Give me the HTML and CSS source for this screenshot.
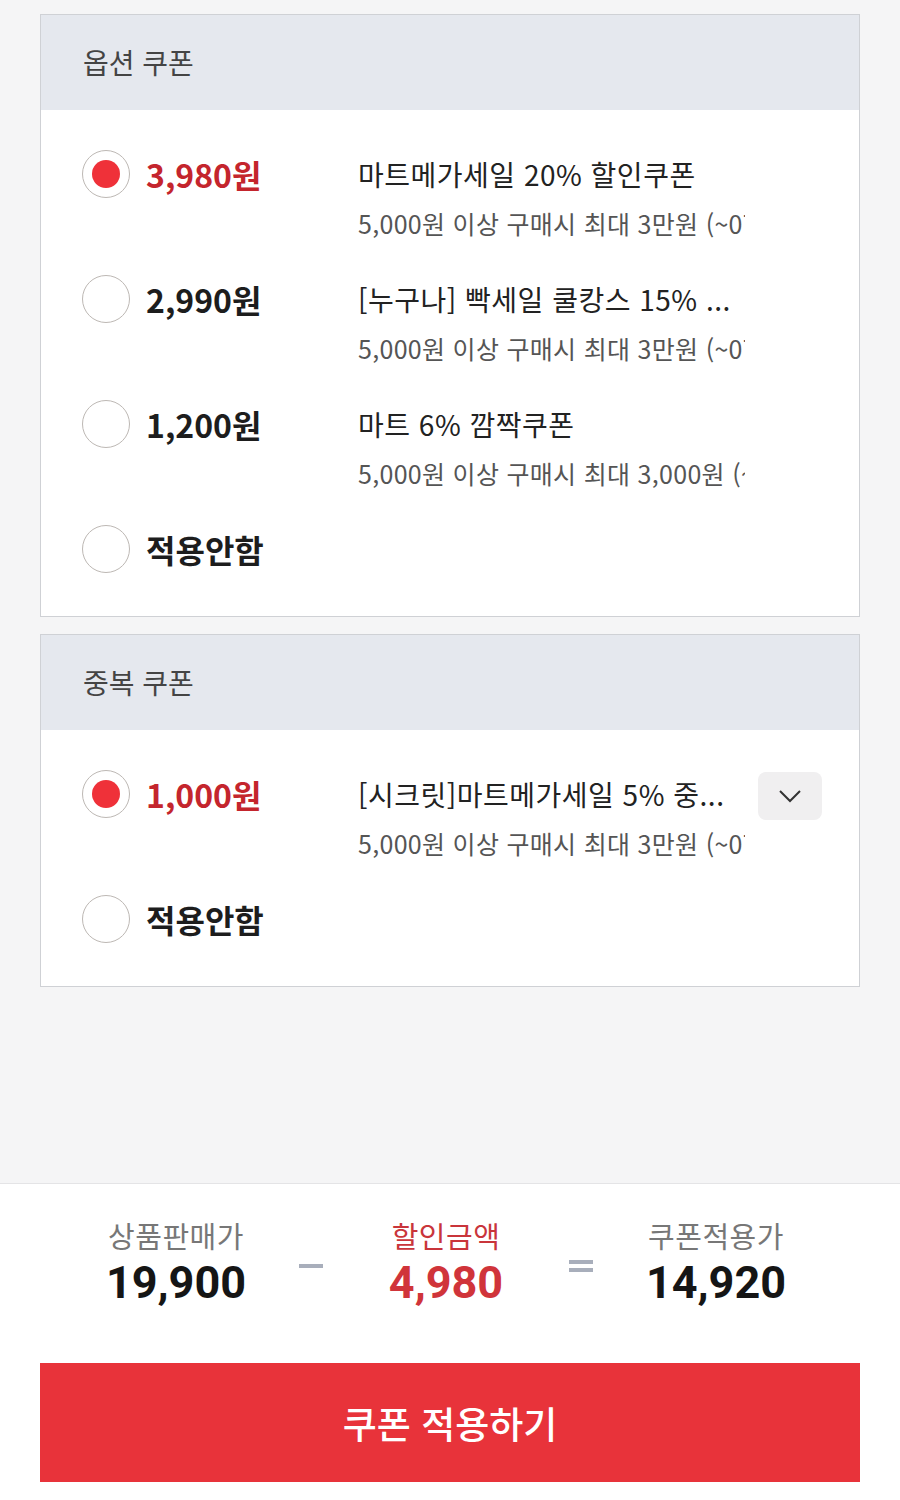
FILE: index.html
```html
<!DOCTYPE html>
<html lang="ko">
<head>
    <meta charset="UTF-8">
    <meta name="viewport" content="width=device-width, initial-scale=1.0">
    <title>쿠폰 적용</title>
    <link rel="stylesheet" href="styles.css">
</head>
<body>
    <div class="page">
        <section class="coupon-box">
            <div class="box-head">옵션 쿠폰</div>
            <div class="box-body">
                <div class="coupon-row">
                    <span class="radio checked"></span>
                    <span class="price red">3,980원</span>
                    <div class="info">
                        <div class="info-title">마트메가세일 20% 할인쿠폰</div>
                        <div class="info-desc">5,000원 이상 구매시 최대 3만원 (~07.31)</div>
                    </div>
                </div>
                <div class="coupon-row">
                    <span class="radio"></span>
                    <span class="price">2,990원</span>
                    <div class="info">
                        <div class="info-title">[누구나] 빡세일 쿨캉스 15% ...</div>
                        <div class="info-desc">5,000원 이상 구매시 최대 3만원 (~07.31)</div>
                    </div>
                </div>
                <div class="coupon-row">
                    <span class="radio"></span>
                    <span class="price">1,200원</span>
                    <div class="info">
                        <div class="info-title">마트 6% 깜짝쿠폰</div>
                        <div class="info-desc">5,000원 이상 구매시 최대 3,000원 (~07.31)</div>
                    </div>
                </div>
                <div class="coupon-row">
                    <span class="radio"></span>
                    <span class="price">적용안함</span>
                </div>
            </div>
        </section>

        <section class="coupon-box">
            <div class="box-head">중복 쿠폰</div>
            <div class="box-body">
                <div class="coupon-row">
                    <span class="radio checked"></span>
                    <span class="price red">1,000원</span>
                    <div class="info">
                        <div class="info-title">[시크릿]마트메가세일 5% 중...</div>
                        <div class="info-desc">5,000원 이상 구매시 최대 3만원 (~07.31)</div>
                    </div>
                    <button class="more" type="button">
                        <svg width="24" height="14" viewBox="0 0 24 14"><polyline points="2,2 12,12 22,2" fill="none" stroke="#333" stroke-width="2"/></svg>
                    </button>
                </div>
                <div class="coupon-row">
                    <span class="radio"></span>
                    <span class="price">적용안함</span>
                </div>
            </div>
        </section>
    </div>

    <div class="summary">
        <div class="calc">
            <div class="calc-item">
                <div class="calc-label">상품판매가</div>
                <div class="calc-value">19,900</div>
            </div>
            <div class="calc-op"><span class="op-minus"></span></div>
            <div class="calc-item">
                <div class="calc-label red-label">할인금액</div>
                <div class="calc-value red-value">4,980</div>
            </div>
            <div class="calc-op"><span class="op-equal"></span></div>
            <div class="calc-item">
                <div class="calc-label">쿠폰적용가</div>
                <div class="calc-value">14,920</div>
            </div>
        </div>
        <button class="apply" type="button">쿠폰 적용하기</button>
    </div>
</body>
</html>
```

FILE: styles.css
```css
body {margin: 0; background: #f5f5f6; font-family: "Noto Sans CJK KR", "Noto Sans", sans-serif; color: #222;}
.page {padding: 14px 40px 0 40px;}

/* coupon boxes */
.coupon-box {background: #ffffff; border: 1px solid #cfd1d5; margin-bottom: 17px;}
.coupon-box:last-child {margin-bottom: 0;}
.box-head {background: #e5e8ee; height: 95px; line-height: 95px; padding-left: 42px; font-size: 28px; color: #444;}
.box-body {padding: 40px 37px 43px 41px; display: flex; flex-direction: column; gap: 28px;}
.coupon-row {display: flex; align-items: flex-start;}

.radio {width: 48px; height: 48px; box-sizing: border-box; border: 1.5px solid #bdb8b4; border-radius: 50%; flex-shrink: 0; display: flex; align-items: center; justify-content: center;}
.radio.checked::after {content: ""; width: 28px; height: 28px; border-radius: 50%; background: #ef3139;}

.price {margin-left: 16px; width: 212px; flex-shrink: 0; line-height: 48px; font-size: 32px; font-weight: 700; color: #1d1d1d;}
.price.red {color: #c4252d;}

.info {width: 387px; overflow: hidden;}
.info-title {font-size: 28px; letter-spacing: 0.5px; line-height: 48px; white-space: nowrap; overflow: hidden; color: #222;}
.info-desc {font-size: 25px; letter-spacing: 0.3px; line-height: 48px; margin-top: 1px; white-space: nowrap; overflow: hidden; color: #555;}

.more {margin: 2px 0 0 13px; width: 64px; height: 48px; border: 0; border-radius: 8px; background: #f0eff0; display: flex; align-items: center; justify-content: center; padding: 0; cursor: pointer;}

/* summary footer */
.summary {margin-top: 196px; background: #ffffff; border-top: 1px solid #e4e4e6; padding: 31px 40px 18px 40px;}
.calc {display: flex; justify-content: center; padding-right: 8px;}
.calc-item {width: 170px; text-align: center;}
.calc-op {width: 100px; display: flex; justify-content: center; align-items: center; padding-top: 8px;}
.calc-label {font-size: 29px; letter-spacing: 0.5px; line-height: 40px; color: #777;}
.calc-label.red-label {color: #c9353b;}
.calc-value {margin-top: 2px; font-family: Roboto, "Noto Sans CJK KR", sans-serif; font-size: 45px; font-weight: 700; line-height: 52px; color: #151515;}
.calc-value.red-value {color: #d0343a;}

.op-minus {display: block; width: 24px; height: 4px; background: #a8aebb;}
.op-equal {display: block; width: 24px; height: 4px; border-top: 4px solid #a8aebb; border-bottom: 4px solid #a8aebb;}

.apply {margin-top: 54px; width: 100%; height: 119px; border: 0; background: #e8333a; color: #ffffff; font-family: "Noto Sans CJK KR", sans-serif; font-size: 37px; font-weight: 500; cursor: pointer;}
```
